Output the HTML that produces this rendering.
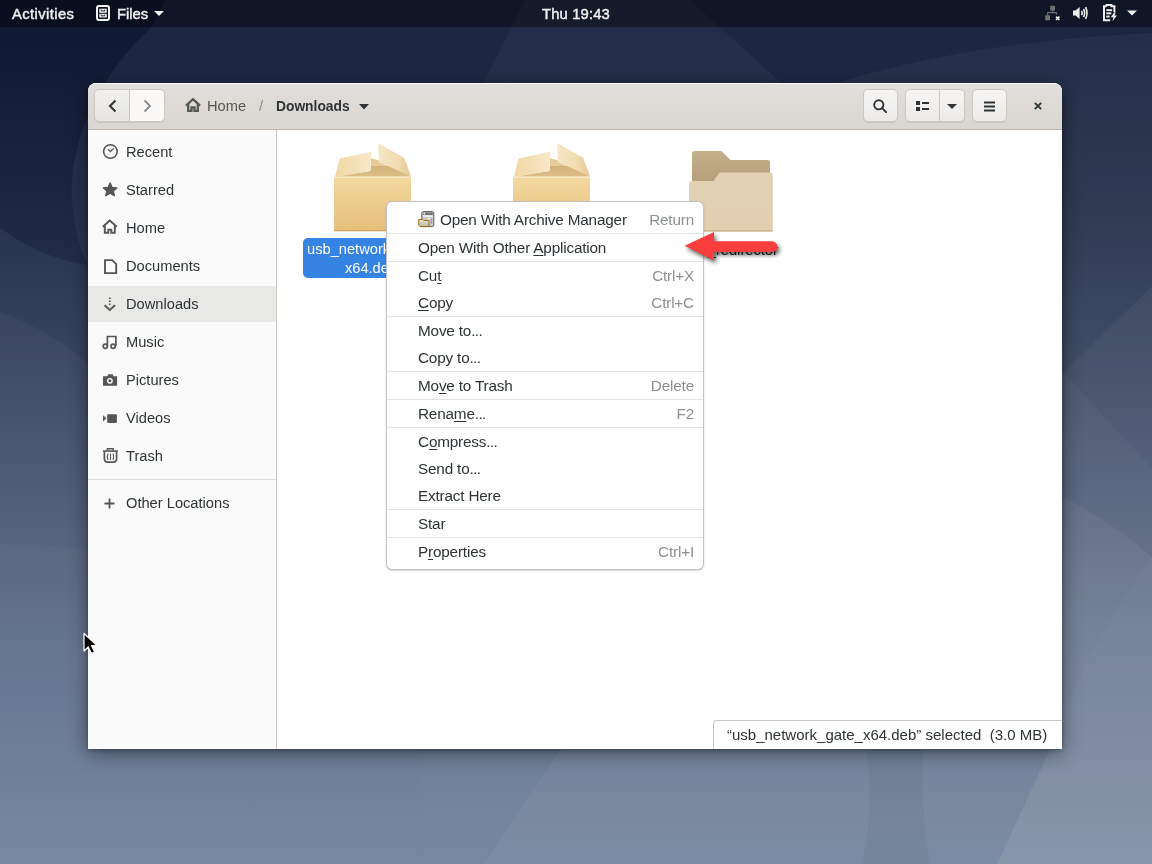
<!DOCTYPE html>
<html><head><meta charset="utf-8">
<style>
*{margin:0;padding:0;box-sizing:border-box}
html,body{width:1152px;height:864px;overflow:hidden}
#topbar,#win,#menu,.abs{will-change:transform}
body{position:relative;font-family:"Liberation Sans",sans-serif;color:#2e3436;font-size:14.67px}
.abs{position:absolute}
#bg{position:absolute;left:0;top:0;width:1152px;height:864px;background:linear-gradient(to bottom,#1a2540 0px,#1c2742 60px,#27334d 220px,#33405a 320px,#485671 480px,#5f6f89 650px,#70829c 864px)}
#topbar{position:absolute;left:0;top:0;width:1152px;height:27px;background:rgba(0,0,0,0.4);color:#eeeeec;font-weight:normal;font-size:14.8px;-webkit-text-stroke:0.45px #eeeeec}
#topbar .t{position:absolute;top:1px;line-height:27px;white-space:nowrap}
#win{position:absolute;left:88px;top:83px;width:974px;height:666px;border-radius:8px 8px 0 0;box-shadow:0 4px 20px rgba(0,0,0,0.45),0 1px 4px rgba(0,0,0,0.3);background:#fff;overflow:hidden}
#hb{position:absolute;left:0;top:0;width:974px;height:47px;background:linear-gradient(to top,#dad6d2,#e1dedb);border-bottom:1px solid #bfb8b1;border-radius:8px 8px 0 0;box-shadow:inset 0 1px rgba(255,255,255,0.8)}
.btn{position:absolute;top:6px;height:33px;border:1px solid #cdc7c2;border-radius:5px;background:linear-gradient(to top,#edebe9 2px,#f6f5f4);box-shadow:0 1px rgba(0,0,0,0.07)}
#side{position:absolute;left:0;top:47px;width:189px;height:619px;background:#fafafa;border-right:1px solid #cdc7c2}
.row{position:absolute;left:0;width:188px;height:36px}
.row .lbl{position:absolute;left:38px;top:0;line-height:36px;white-space:nowrap}
.row svg{position:absolute;left:14px;top:10px}
#content{position:absolute;left:189px;top:47px;width:785px;height:619px;background:#fff}
#menu{position:absolute;left:386px;top:201px;width:318px;height:369px;background:#fff;border:1px solid rgba(0,0,0,0.23);border-radius:6px;box-shadow:0 1px 2px rgba(0,0,0,0.15);padding:4px 0}
.mi{position:relative;height:27px;line-height:28px;padding-left:31px;white-space:nowrap;font-size:15.3px;letter-spacing:-0.18px}
.mi .acc{position:absolute;right:9px;top:0;color:#8d9091}
.sep{height:1px;background:#e3e3e3;margin:0}
u{text-decoration:underline;text-decoration-thickness:1px;text-underline-offset:1.5px}
</style></head><body>
<div id="bg">
<svg width="1152" height="864" style="position:absolute;left:0;top:0">
 <defs><linearGradient id="dkG" gradientUnits="userSpaceOnUse" x1="0" y1="27" x2="0" y2="265"><stop offset="0" stop-color="#050e26" stop-opacity="0.5"/><stop offset="1" stop-color="#0a1430" stop-opacity="0.3"/></linearGradient></defs>
 <path d="M0 0H165L152 27C103 70 68 140 72 200C74 230 80 250 88 265Q40 258 0 228Z" fill="url(#dkG)"/>
 <path d="M0 312Q50 330 88 364L417 500V749Q423 805 421 864H0Z" fill="#fff" opacity="0.035"/>
 <path d="M0 544Q44 544 88 549L417 600V749Q423 805 421 864H0Z" fill="#fff" opacity="0.02"/>
 <path d="M417 600L1062 497Q1110 520 1152 557V864H421Q423 805 417 749Z" fill="#fff" opacity="0.055"/>
 <path d="M525 0H690L800 100L470 110Z" fill="#fff" opacity="0.035"/>
 <path d="M800 95Q950 42 1152 33V864H997L1050 749H800Z" fill="#fff" opacity="0.045"/>
 <path d="M1152 286L900 532V749H1050L997 864H1152Z" fill="#fff" opacity="0.04"/>
 <path d="M900 196L1152 468V864H997L1050 749H900Z" fill="#fff" opacity="0.03"/>
 <path d="M1152 557Q1090 640 1050 749L997 864H1152Z" fill="#fff" opacity="0.02"/>
 <path d="M600 650L561 749L484 864H997L1050 749V650Z" fill="#fff" opacity="0.04"/>
 <path d="M866 650V749Q875 805 862 864H930Q920 805 923 749V650Z" fill="#000" opacity="0.035"/>
</svg>
</div>

<div id="topbar">
  <div class="t" style="left:12px;letter-spacing:0.4px">Activities</div>
  <svg class="abs" style="left:96px;top:5px" width="14" height="16" viewBox="0 0 14 16"><rect x="1" y="1" width="12" height="14" rx="2" fill="none" stroke="#f2f2f0" stroke-width="2"/><rect x="3.3" y="3.7" width="7.4" height="4.1" fill="#f2f2f0"/><rect x="3.3" y="8.8" width="7.4" height="3.7" fill="#f2f2f0"/><path d="M5.3 4.6V5.9H8.7V4.6M5.3 9.6V10.9H8.7V9.6" fill="none" stroke="#10151f" stroke-width="0.9"/></svg>
  <div class="t" style="left:117px">Files</div>
  <svg class="abs" style="left:154px;top:11px" width="10" height="5"><path d="M0 0h10L5 5z" fill="#eeeeec"/></svg>
  <div class="t" style="left:542px;letter-spacing:0.15px">Thu 19:43</div>
  <svg class="abs" style="left:1045px;top:5px" width="17" height="17" viewBox="0 0 17 17"><rect x="5.2" y="0.8" width="4.8" height="4.8" fill="#6f7172"/><path d="M7.6 5.5V7.6M2.6 7.6H11.5M2.6 7.6V10.3M11.5 7.6V9.5" fill="none" stroke="#6f7172" stroke-width="1.1"/><rect x="0.2" y="10.3" width="4.8" height="5" fill="#6f7172"/><path d="M11 11.6L14.4 15M14.4 11.6L11 15" stroke="#eeeeec" stroke-width="1.7"/></svg>
  <svg class="abs" style="left:1072px;top:5px" width="17" height="17" viewBox="0 0 17 17"><path d="M1 5.6H3.6L7.6 1.9V14.1L3.6 10.4H1Z" fill="#eeeeec"/><path d="M9.6 5.8Q10.7 8 9.6 10.2M11.6 3.9Q13.6 8 11.6 12.1M13.6 2.2Q16.4 8 13.6 13.8" fill="none" stroke="#eeeeec" stroke-width="1.6"/></svg>
  <svg class="abs" style="left:1102px;top:4px" width="17" height="18" viewBox="0 0 17 18"><path d="M4.6 2.3V1.1H9.4V2.3H12.4V8.2M8.2 16.2H2V2.3H4.6" fill="none" stroke="#eeeeec" stroke-width="2"/><rect x="4.3" y="5.2" width="5.8" height="1.9" fill="#eeeeec"/><rect x="4.3" y="8.4" width="5" height="1.9" fill="#eeeeec"/><rect x="4.3" y="11.6" width="3.4" height="1.9" fill="#eeeeec"/><path d="M12.2 8.4L8.8 13.3H11.4L10.4 17.2L15 11.4H12.5L13.6 8.4Z" fill="#eeeeec"/></svg>
  <svg class="abs" style="left:1127px;top:10px" width="10" height="6"><path d="M0 0.5h10L5 5.5z" fill="#eeeeec"/></svg>
</div>

<div id="win">
  <div id="hb">
    <div class="btn" style="left:6px;width:71px;background:linear-gradient(to top,#e8e6e3,#f1f0ef)"></div>
    <div class="btn" style="left:41px;width:36px;border-left:1px solid #cdc7c2;border-radius:0 5px 5px 0;background:#faf9f8;box-shadow:none"></div>
    <svg class="abs" style="left:19px;top:16px" width="12" height="14" viewBox="0 0 12 14"><path d="M8.5 1.5L3 7l5.5 5.5" fill="none" stroke="#2e3436" stroke-width="2"/></svg>
    <svg class="abs" style="left:53px;top:16px" width="12" height="14" viewBox="0 0 12 14"><path d="M3.5 1.5L9 7l-5.5 5.5" fill="none" stroke="#8b8e8f" stroke-width="2"/></svg>
    <svg class="abs" style="left:97px;top:15px" width="16" height="14" viewBox="0 0 16 14"><path d="M1 7.6L8 1.2L15 7.6M3.2 6V13H6.5V9.5H9.5V13H12.8V6" fill="none" stroke="#555753" stroke-width="2.3"/></svg>
    <div class="abs" style="left:119px;top:0px;line-height:46px;color:#555753">Home</div>
    <div class="abs" style="left:171px;top:0px;line-height:46px;color:#8b8e8f">/</div>
    <div class="abs" style="left:188px;top:1px;line-height:46px;font-weight:bold;font-size:13.8px;color:#2e3436">Downloads</div>
    <svg class="abs" style="left:271px;top:21px" width="10" height="6"><path d="M0 0h10L5 5.5z" fill="#2e3436"/></svg>
    <div class="btn" style="left:775px;width:35px"></div>
    <svg class="abs" style="left:785px;top:16px" width="15" height="14" viewBox="0 0 15 14"><circle cx="5.8" cy="5.8" r="4.6" fill="none" stroke="#2e3436" stroke-width="1.9"/><path d="M8.9 8.9l4.2 4.2" stroke="#2e3436" stroke-width="2" stroke-linecap="round"/></svg>
    <div class="btn" style="left:817px;width:60px"></div>
    <div class="abs" style="left:851px;top:7px;width:1px;height:31px;background:#cdc7c2"></div>
    <svg class="abs" style="left:828px;top:18px" width="13" height="10" viewBox="0 0 13 10"><rect x="0" y="0" width="4" height="4" fill="#2e3436"/><rect x="0" y="6" width="4" height="4" fill="#2e3436"/><rect x="6" y="1" width="7" height="2" fill="#2e3436"/><rect x="6" y="7" width="7" height="2" fill="#2e3436"/></svg>
    <svg class="abs" style="left:859px;top:21px" width="10" height="6"><path d="M0 0h10L5 5z" fill="#2e3436"/></svg>
    <div class="btn" style="left:884px;width:35px"></div>
    <svg class="abs" style="left:896px;top:18px" width="11" height="11" viewBox="0 0 11 11"><rect x="0" y="0.5" width="11" height="2" fill="#2e3436"/><rect x="0" y="4.5" width="11" height="2" fill="#2e3436"/><rect x="0" y="8.5" width="11" height="2" fill="#2e3436"/></svg>
    <svg class="abs" style="left:946px;top:19px" width="8" height="8" viewBox="0 0 8 8"><path d="M0.8 0.8l6.4 6.4M7.2 0.8L0.8 7.2" stroke="#2e3436" stroke-width="1.9"/></svg>
  </div>
  <div id="side">
  <div class="row" style="top:4px"><svg class="abs" style="left:14px;top:9px" width="17" height="17" viewBox="0 0 17 17"><circle cx="8.4" cy="8.5" r="6.8" fill="none" stroke="#555753" stroke-width="1.6"/><path d="M6.2 6.3L8.4 8.6L11.8 5.4" fill="none" stroke="#555753" stroke-width="1.3"/></svg><div class="lbl">Recent</div></div>
  <div class="row" style="top:42px"><svg class="abs" style="left:14px;top:9px" width="17" height="17" viewBox="0 0 17 17"><path d="M8.1 2L10.1 6.5L14.8 6.9L11.2 10L12.3 14.6L8.1 12.1L3.9 14.6L5 10L1.4 6.9L6.1 6.5Z" fill="#555753" stroke="#555753" stroke-width="1.5" stroke-linejoin="round"/></svg><div class="lbl">Starred</div></div>
  <div class="row" style="top:80px"><svg class="abs" style="left:13px;top:9px" width="18" height="17" viewBox="0 0 18 17"><path d="M1.8 7.8L8.8 1.5L15.8 7.8M3.8 6.5V13.8H7.3V10.6H10.3V13.8H13.8V6.5" fill="none" stroke="#555753" stroke-width="1.9" stroke-linejoin="miter"/></svg><div class="lbl">Home</div></div>
  <div class="row" style="top:118px"><svg class="abs" style="left:14px;top:10px" width="17" height="17" viewBox="0 0 17 17"><path d="M3 2.1H10.2L14.2 6.2V15.1H3Z" fill="none" stroke="#555753" stroke-width="1.9" stroke-linejoin="miter"/></svg><div class="lbl">Documents</div></div>
  <div class="row" style="top:156px;background:#e8e8e7"><svg class="abs" style="left:14px;top:10px" width="17" height="17" viewBox="0 0 17 17"><path d="M7.8 1.5V3M7.8 4.5V6M7.8 7.5V9" stroke="#555753" stroke-width="1.7"/><path d="M2.6 9.3L7.8 14L13 9.3" fill="none" stroke="#555753" stroke-width="2"/></svg><div class="lbl">Downloads</div></div>
  <div class="row" style="top:194px"><svg class="abs" style="left:13px;top:10px" width="17" height="17" viewBox="0 0 17 17"><path d="M6.4 12V2.5H14.9V12" fill="none" stroke="#555753" stroke-width="1.7"/><circle cx="4.3" cy="12.3" r="2.1" fill="none" stroke="#555753" stroke-width="1.7"/><circle cx="12.1" cy="12.3" r="2.1" fill="none" stroke="#555753" stroke-width="1.7"/></svg><div class="lbl">Music</div></div>
  <div class="row" style="top:232px"><svg class="abs" style="left:14px;top:10px" width="17" height="17" viewBox="0 0 17 17"><path d="M1 4.2H5.4L6.2 2.2H10.8L11.6 4.2H15.1V13.7H1Z" fill="#555753"/><circle cx="7.9" cy="8.8" r="2.9" fill="#fafafa"/><circle cx="7.9" cy="8.8" r="1.5" fill="#555753"/></svg><div class="lbl">Pictures</div></div>
  <div class="row" style="top:270px"><svg class="abs" style="left:14px;top:9px" width="17" height="17" viewBox="0 0 17 17"><path d="M1 6.2L4.5 9.3L1 12.4Z" fill="#555753"/><rect x="5.2" y="5.3" width="9.7" height="8.6" rx="0.8" fill="#555753"/></svg><div class="lbl">Videos</div></div>
  <div class="row" style="top:308px"><svg class="abs" style="left:14px;top:9px" width="17" height="17" viewBox="0 0 17 17"><path d="M1 4.1H16" stroke="#555753" stroke-width="1.6"/><path d="M5.3 3.6V1.7H11.2V3.6" fill="none" stroke="#555753" stroke-width="1.4"/><path d="M2.4 5V11.6C2.4 14.2 4 15.2 5.5 15.2H11.5C13 15.2 14.6 14.2 14.6 11.6V5" fill="none" stroke="#555753" stroke-width="1.7"/><path d="M6 6.5C5.2 8.5 5.2 11 6 13M11 6.5C11.8 8.5 11.8 11 11 13M8.5 6.5V13" fill="none" stroke="#555753" stroke-width="1.1"/></svg><div class="lbl">Trash</div></div>
  <div class="abs" style="left:0;top:349px;width:188px;height:1px;background:#dcdcdc"></div>
  <div class="row" style="top:355px"><svg class="abs" style="left:16px;top:13px" width="12" height="12" viewBox="0 0 12 12"><path d="M5.5 0.5V10.5M0.5 5.5H10.5" stroke="#555753" stroke-width="1.8"/></svg><div class="lbl">Other Locations</div></div>
</div>
  <div id="content"></div>
</div>

<svg width="0" height="0" style="position:absolute">
 <defs>
  <linearGradient id="bodyG" x1="0" y1="0" x2="0" y2="1"><stop offset="0" stop-color="#f4d9a0"/><stop offset="1" stop-color="#e6c07c"/></linearGradient>
  <linearGradient id="lfG" x1="0" y1="0" x2="1" y2="0"><stop offset="0" stop-color="#f0d7a3"/><stop offset="1" stop-color="#f8e8c9"/></linearGradient>
  <linearGradient id="rfG" x1="0" y1="0" x2="1" y2="0"><stop offset="0" stop-color="#f6e6c6"/><stop offset="0.6" stop-color="#f1dcb0"/><stop offset="1" stop-color="#e5c690"/></linearGradient>
  <linearGradient id="inG" x1="0" y1="0" x2="0" y2="1"><stop offset="0" stop-color="#d4b47c"/><stop offset="1" stop-color="#dcbd85"/></linearGradient>
  <linearGradient id="fbG" x1="0" y1="0" x2="0" y2="1"><stop offset="0" stop-color="#c4b08b"/><stop offset="1" stop-color="#ad9872"/></linearGradient>
  <linearGradient id="ffG" x1="0" y1="0" x2="0" y2="1"><stop offset="0" stop-color="#e3d1b4"/><stop offset="1" stop-color="#e1cfb0"/></linearGradient>
  <pattern id="stripes" width="3" height="10" patternUnits="userSpaceOnUse"><rect width="1" height="10" fill="rgba(190,140,60,0.022)"/></pattern>
  <g id="pkg">
   <path d="M37 -18.4L44.8 -16.4V-14.7L55.5 -10H37Z" fill="#e4cb98"/><path d="M1 0L36.3 -5.8L37 -10.6H55.5L76.9 -0.6V0Z" fill="url(#inG)"/><rect x="37" y="-10.6" width="19" height="0.9" fill="#cdb07a" opacity="0.7"/>
   <rect x="0" y="0" width="77" height="54.5" rx="1" fill="url(#bodyG)"/>
   <rect x="0" y="0" width="77" height="54.5" rx="1" fill="url(#stripes)"/>
   <rect x="0" y="0" width="77" height="1.2" fill="#f9e9c6"/>
   <rect x="0" y="53.3" width="77" height="1.2" fill="#c99f5d" opacity="0.8"/>
   <path d="M1 0L5.6 -18.2L37.4 -25L36.3 -5.8Z" fill="url(#lfG)"/>
   <path d="M44.2 -33.5L70.3 -18.7L76.9 -0.6L44.8 -14.7Z" fill="url(#rfG)"/>
  </g>
 </defs>
</svg>
<svg class="abs" style="left:300px;top:136px" width="500" height="100" viewBox="0 0 500 100">
 <use href="#pkg" x="34" y="40.7"/>
 <use href="#pkg" x="213" y="40.7"/>
 <path d="M392 17.5Q392 15 394.5 15H421.5L430.5 24H467.5Q470 24 470 26.5V60H392Z" fill="url(#fbG)"/>
 <path d="M389 47.5Q389 45 391.5 45H413.5L419.5 36.5H470.5Q472.8 36.5 472.8 39V93Q472.8 95.5 470.3 95.5H391.5Q389 95.5 389 93Z" fill="url(#ffG)"/>
 <rect x="389" y="94.3" width="83.8" height="1.2" fill="#c7ae88"/>
</svg>
<div class="abs" style="left:303px;top:238px;width:136px;height:40px;background:#3584e4;border-radius:5px"></div>
<div class="abs" style="left:303px;top:240px;width:136px;line-height:19px;color:#fff;text-align:center;white-space:nowrap">usb_network_gate_<br>x64.deb</div>
<div class="abs" style="left:671px;top:240.5px;width:120px;line-height:19px;color:#1a1a1a;text-align:center;white-space:nowrap">usb_redirector</div>
<div class="abs" style="left:713px;top:720px;width:349px;height:29px;background:#fff;border-left:1px solid #cdc7c2;border-top:1px solid #cdc7c2;border-radius:4px 0 0 0"></div>
<div class="abs" style="left:727px;top:720px;line-height:29px;white-space:nowrap;color:#2e3436;font-size:15px">“usb_network_gate_x64.deb” selected&nbsp; (3.0 MB)</div>

<div id="menu">
  <div class="mi"><svg class="abs" style="left:31px;top:5px" width="17" height="17" viewBox="0 0 17 17"><defs><linearGradient id="mfg" x1="0" y1="0" x2="0" y2="1"><stop offset="0" stop-color="#e6e8dc"/><stop offset="1" stop-color="#b3b89c"/></linearGradient></defs><rect x="3.8" y="0.6" width="12" height="15" rx="1.6" fill="#c9c9c9" stroke="#5e5e5e" stroke-width="1"/><rect x="5" y="1.6" width="9.8" height="2.3" fill="#6c6c6c"/><rect x="5.5" y="1.8" width="1.6" height="1.6" fill="#f0f0f0"/><rect x="5" y="4.4" width="9.8" height="1.4" fill="#fafafa"/><path d="M10.8 6.5V13" stroke="#f2f2f2" stroke-width="1.3"/><path d="M13.3 8V13" stroke="#8a8a8a" stroke-width="0.8"/><path d="M0.7 8.5H4.8L5.8 9.5H11V15.6H1.9L0.7 14.2Z" fill="url(#mfg)" stroke="#a5691a" stroke-width="1"/></svg><span style="padding-left:22px">Open With Archive Manager</span><span class="acc">Return</span></div>
  <div class="sep"></div>
  <div class="mi">Open With Other <u>A</u>pplication</div>
  <div class="sep"></div>
  <div class="mi">Cu<u>t</u><span class="acc">Ctrl+X</span></div>
  <div class="mi"><u>C</u>opy<span class="acc">Ctrl+C</span></div>
  <div class="sep"></div>
  <div class="mi">Move to<span style="letter-spacing:-0.6px">...</span></div>
  <div class="mi">Copy to<span style="letter-spacing:-0.6px">...</span></div>
  <div class="sep"></div>
  <div class="mi">Mo<u>v</u>e to Trash<span class="acc">Delete</span></div>
  <div class="sep"></div>
  <div class="mi">Rena<u>m</u>e<span style="letter-spacing:-0.6px">...</span><span class="acc">F2</span></div>
  <div class="sep"></div>
  <div class="mi">C<u>o</u>mpress<span style="letter-spacing:-0.6px">...</span></div>
  <div class="mi">Send to<span style="letter-spacing:-0.6px">...</span></div>
  <div class="mi">Extract Here</div>
  <div class="sep"></div>
  <div class="mi">Star</div>
  <div class="sep"></div>
  <div class="mi">P<u>r</u>operties<span class="acc">Ctrl+I</span></div>
</div>

<svg class="abs" style="left:670px;top:222px" width="120" height="50" viewBox="670 222 120 50">
 <defs><filter id="ash" x="-20%" y="-40%" width="140%" height="180%"><feGaussianBlur stdDeviation="2"/></filter></defs>
 <path d="M686.5 248.5L716 235V244.5H775A5.3 5.3 0 0 1 775 255H716V263.6Z" fill="rgba(0,0,0,0.6)" filter="url(#ash)"/>
 <path d="M684.7 245.8L714 232V241.3H772A5.4 5.4 0 0 1 772 252.1H714V260.6Z" fill="#fa3e3e"/>
</svg>
<svg class="abs" style="left:80px;top:630px" width="24" height="26" viewBox="80 630 24 26">
 <path d="M84 633.5V651L88.2 647L91.5 653.5L94.5 652L91.5 645.5H97Z" fill="#000" stroke="#fff" stroke-width="1.2" stroke-linejoin="round"/>
</svg>
</body></html>
